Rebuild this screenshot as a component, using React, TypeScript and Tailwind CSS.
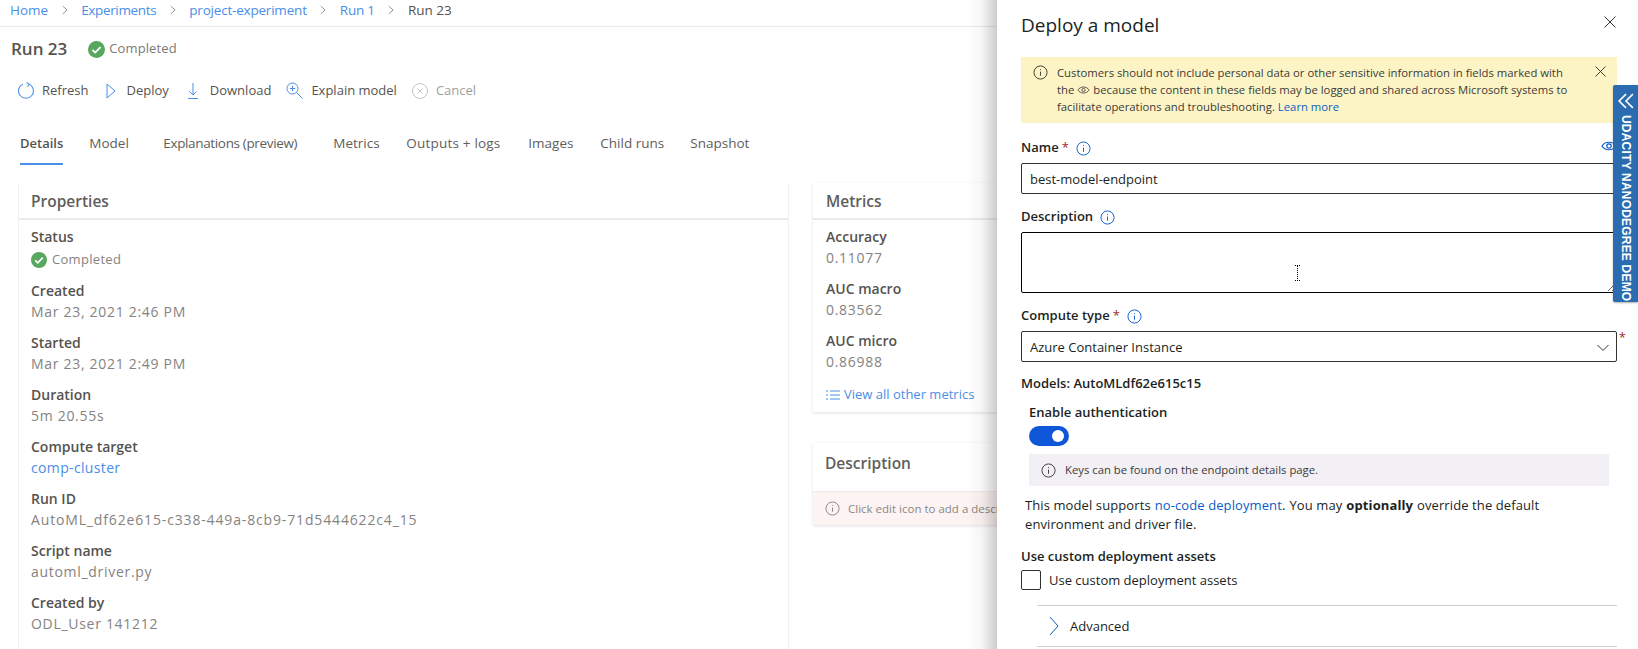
import type { ReactNode } from "react";

function Info({ className }: { className: string }) {
  return (
    <svg viewBox="0 0 16 16" fill="none" stroke="currentColor" strokeWidth="1" className={className}>
      <circle cx="8" cy="8" r="7" />
      <path d="M8 7v4.5M8 4.4v1" />
    </svg>
  );
}

function Check({ className }: { className: string }) {
  return (
    <svg viewBox="0 0 16 16" className={className}>
      <circle cx="8" cy="8" r="8" fill="#57a75e" />
      <path d="M4.2 8.3l2.6 2.6 5-5.2" fill="none" stroke="#fff" strokeWidth="1.7" />
    </svg>
  );
}

function Chevron() {
  return (
    <svg viewBox="0 0 8 12" fill="none" stroke="#71706e" strokeWidth="1" className="mx-[13.5px] h-[12px] w-[6px]">
      <path d="M1 .8L6.8 6 1 11.2" />
    </svg>
  );
}

function Tool({ icon, label, muted, className }: { icon: ReactNode; label: string; muted?: boolean; className: string }) {
  return (
    <div className={`flex items-center ${className}`}>
      {icon}
      <span className={muted ? "text-[#a19f9d]" : "text-[#55534f]"}>{label}</span>
    </div>
  );
}

function Field({ label, children, gap = "mb-[11px]" }: { label: string; children: ReactNode; gap?: string }) {
  return (
    <div className={gap}>
      <div className="h-[20px] text-[14px] leading-[20px] font-semibold text-[#55534f]">{label}</div>
      <div className="h-[21px] text-[14px] leading-[21px] tracking-[0.7px] text-[#85837f]">{children}</div>
    </div>
  );
}

const tabs = [
  ["Model", "w-[74px]"],
  ["Explanations (preview)", "w-[170px] tracking-[-0.35px]"],
  ["Metrics", "w-[73px]"],
  ["Outputs + logs", "w-[122px] tracking-[0.2px]"],
  ["Images", "w-[72px]"],
  ["Child runs", "w-[90px]"],
  ["Snapshot", "w-[70px]"],
];

export default function App() {
  return (
    <div className="relative h-[649px] w-[1638px] overflow-hidden bg-white font-['Open_Sans',sans-serif] text-[14px]">
      {/* breadcrumb */}
      <div className="flex h-[27px] items-center border-b border-[#edebe9] pb-[6px] pl-[10px] text-[13.5px] text-[#4a8ee8]">
        <span>Home</span>
        <Chevron />
        <span className="tracking-[-0.35px]">Experiments</span>
        <Chevron />
        <span className="tracking-[-0.2px]">project-experiment</span>
        <Chevron />
        <span className="tracking-[-0.2px]">Run 1</span>
        <Chevron />
        <span className="text-[#55534f]">Run 23</span>
      </div>

      {/* title */}
      <div className="flex h-[45px] items-center pb-[1px] pl-[11px]">
        <span className="mr-[21px] text-[17px] font-semibold text-[#55534f]">Run 23</span>
        <Check className="mr-[4px] h-[17px] w-[17px]" />
        <span className="text-[13px] tracking-[0.1px] text-[#7b7976]">Completed</span>
      </div>

      {/* toolbar */}
      <div className="flex h-[36px] items-center pt-[1px] text-[13px]">
        <Tool
          className="ml-[18px] gap-[7px]"
          label="Refresh"
          icon={
            <svg viewBox="0 0 16 16" fill="none" stroke="#4a8ee8" className="h-[17px] w-[17px]">
              <path d="M10.5 2A7 7 0 1 1 4.5 2M8 .5L10.5 2 9 4.5" />
            </svg>
          }
        />
        <Tool
          className="ml-[18px] gap-[10px]"
          label="Deploy"
          icon={
            <svg viewBox="0 0 10 16" fill="none" stroke="#4a8ee8" className="h-[16px] w-[10px]">
              <path d="M1 1l8 7-8 7z" />
            </svg>
          }
        />
        <Tool
          className="ml-[19px] gap-[12px]"
          label="Download"
          icon={
            <svg viewBox="0 0 10 16" fill="none" stroke="#4a8ee8" className="h-[16px] w-[10px]">
              <path d="M5 0v12M1.5 8.5L5 12l3.5-3.5M0 15.5h10" />
            </svg>
          }
        />
        <Tool
          className="ml-[15px] gap-[8px]"
          label="Explain model"
          icon={
            <svg viewBox="0 0 17 17" fill="none" stroke="#4a8ee8" className="h-[17px] w-[17px]">
              <circle cx="6.5" cy="6.5" r="5.5" />
              <path d="M10.5 10.5L16.5 16.5M6.5 3.8v5.4M3.8 6.5h5.4" />
            </svg>
          }
        />
        <Tool
          className="ml-[15px] gap-[8px]"
          label="Cancel"
          muted
          icon={
            <svg viewBox="0 0 16 16" fill="none" stroke="#c8c6c4" className="h-[16px] w-[16px]">
              <circle cx="8" cy="8" r="7.5" />
              <path d="M5.5 5.5l5 5M10.5 5.5l-5 5" />
            </svg>
          }
        />
      </div>

      {/* tabs */}
      <div className="flex h-[57px] pl-[20px] pt-[25px] text-[13.5px] leading-[20px] text-[#605e5c]">
        <div className="mr-[26px] h-[32px] border-b-[2px] border-[#4a8ee8] text-[13px] font-semibold text-[#55534f]">Details</div>
        {tabs.map(([name, width]) => (
          <div key={name} className={width}>
            {name}
          </div>
        ))}
      </div>

      {/* cards */}
      <div className="mt-[18px] flex gap-[24px] pl-[18px]">
        <div className="h-[500px] w-[771px] border-l border-r border-[#f3eff5] bg-white">
          <div className="flex h-[37px] items-center border-b-2 border-[#edebe9] pl-[12px] pt-[3px] text-[15.5px] font-semibold text-[#605e5c]">
            Properties
          </div>
          <div className="pl-[12px] pt-[7px]">
            <Field label="Status">
              <div className="mt-[2px] flex items-center gap-[5px] text-[13px] tracking-[0.3px]">
                <Check className="h-[16px] w-[16px]" />
                <span>Completed</span>
              </div>
            </Field>
            <Field label="Created">Mar 23, 2021 2:46 PM</Field>
            <Field label="Started">Mar 23, 2021 2:49 PM</Field>
            <Field label="Duration">5m 20.55s</Field>
            <Field label="Compute target">
              <span className="tracking-[0.35px] text-[#4a8ee8]">comp-cluster</span>
            </Field>
            <Field label="Run ID">
              <span className="tracking-[0.85px]">AutoML_df62e615-c338-449a-8cb9-71d5444622c4_15</span>
            </Field>
            <Field label="Script name">automl_driver.py</Field>
            <Field label="Created by">ODL_User 141212</Field>
          </div>
        </div>

        <div className="w-[400px]">
          <div className="h-[229px] bg-white shadow-[0_1px_3px_rgba(0,0,0,0.12)]">
            <div className="flex h-[37px] items-center border-b-2 border-[#edebe9] pl-[13px] pt-[3px] text-[15.5px] font-semibold text-[#605e5c]">
              Metrics
            </div>
            <div className="pl-[13px] pt-[7px]">
              <Field label="Accuracy">0.11077</Field>
              <Field label="AUC macro">0.83562</Field>
              <Field label="AUC micro" gap="mb-[13px]">0.86988</Field>
              <div className="flex h-[20px] items-center gap-[4px] text-[13px] text-[#4a8ee8]">
                <svg viewBox="0 0 14 10" fill="none" stroke="#4a8ee8" className="h-[10px] w-[14px]">
                  <path d="M0 1h2M4 1h10M0 5h2M4 5h10M0 9h2M4 9h10" />
                </svg>
                <span>View all other metrics</span>
              </div>
            </div>
          </div>
          <div className="mt-[31px] bg-white shadow-[0_1px_3px_rgba(0,0,0,0.12)]">
            <div className="flex h-[49px] items-center border-b border-[#edebe9] pb-[6px] pl-[12px] text-[15.5px] font-semibold text-[#605e5c]">
              Description
            </div>
            <div className="flex h-[33px] items-center gap-[8px] bg-[#fdf3f3] pl-[12px] text-[11.5px] text-[#8a8886]">
              <Info className="h-[15px] w-[15px]" />
              <span>Click edit icon to add a description</span>
            </div>
          </div>
        </div>
      </div>

      {/* deploy panel */}
      <div className="absolute inset-y-0 left-[967px] w-[30px] bg-gradient-to-r from-black/0 via-black/[0.04] to-black/20" />
      <div className="absolute inset-y-0 left-[997px] right-0 bg-white pl-[24px] pr-[21px] text-[13px] text-[#201f1e]">
        <div className="flex h-[50px] items-center justify-between">
          <span className="text-[19px] text-[#201f1e]">Deploy a model</span>
          <svg viewBox="0 0 12 12" fill="none" stroke="#323130" className="mr-[1px] mb-[6px] h-[12px] w-[12px]">
            <path d="M.5.5l11 11M11.5.5l-11 11" />
          </svg>
        </div>

        <div className="mt-[7px] flex h-[66px] bg-[#fdf4c5] pl-[12px] pr-[11px] pt-[7px] text-[11.3px] leading-[17px] text-[#3b3a39]">
          <Info className="mt-[1px] h-[15px] w-[15px] shrink-0" />
          <div className="ml-[9px] w-[530px]">
            <div>Customers should not include personal data or other sensitive information in fields marked with</div>
            <div className="flex items-center gap-[3px]">
              <span>the</span>
              <svg viewBox="0 0 16 10" fill="none" stroke="#3b3a39" className="h-[8px] w-[13px]">
                <path d="M1 5c3-5 11-5 14 0-3 5-11 5-14 0z" />
                <circle cx="8" cy="5" r="2" />
              </svg>
              <span>because the content in these fields may be logged and shared across Microsoft systems to</span>
            </div>
            <div className="flex gap-[3px]">
              <span>facilitate operations and troubleshooting.</span>
              <span className="text-[#0b5cc7]">Learn more</span>
            </div>
          </div>
          <svg viewBox="0 0 12 12" fill="none" stroke="#323130" className="ml-auto mt-[2px] h-[11px] w-[11px]">
            <path d="M.5.5l11 11M11.5.5l-11 11" />
          </svg>
        </div>

        <div className="mt-[15px] flex h-[20px] items-center">
          <span className="font-semibold">Name</span>
          <span className="ml-[3px] text-[#a4262c]">*</span>
          <Info className="ml-[7px] h-[15px] w-[15px] text-[#0b5cc7]" />
          <svg viewBox="0 0 16 10" fill="none" stroke="#0b5cc7" strokeWidth="1.2" className="ml-auto mb-[4px] h-[10px] w-[16px]">
            <path d="M1 5c3-5 11-5 14 0-3 5-11 5-14 0z" />
            <circle cx="8" cy="5" r="2.2" />
          </svg>
        </div>
        <div className="mt-[5px] flex h-[31px] items-center rounded-[2px] border border-[#323130] pl-[8px] pt-[2px] text-[13px]">
          <span>best-model-endpoint</span>
        </div>

        <div className="mt-[13px] flex h-[20px] items-center">
          <span className="font-semibold">Description</span>
          <Info className="ml-[7px] h-[15px] w-[15px] text-[#0b5cc7]" />
        </div>
        <textarea className="mt-[5px] block h-[61px] w-full rounded-[2px] border border-black" />

        <div className="mt-[13px] flex h-[20px] items-center">
          <span className="font-semibold">Compute type</span>
          <span className="ml-[3px] text-[#a4262c]">*</span>
          <Info className="ml-[7px] h-[15px] w-[15px] text-[#0b5cc7]" />
        </div>
        <div className="relative mt-[5px] flex h-[31px] items-center justify-between rounded-[2px] border border-[#323130] pl-[8px] pr-[7px] pt-[2px]">
          <span>Azure Container Instance</span>
          <svg viewBox="0 0 12 8" fill="none" stroke="#323130" className="h-[8px] w-[12px]">
            <path d="M.5 1L6 6.5 11.5 1" />
          </svg>
          <span className="absolute right-[-10px] top-[-4px] text-[#a4262c]">*</span>
        </div>

        <div className="mt-[11px] h-[20px] font-semibold leading-[20px]">Models: AutoMLdf62e615c15</div>
        <div className="ml-[8px] mt-[9px] h-[20px] font-semibold leading-[20px]">Enable authentication</div>
        <div className="ml-[8px] mt-[4px] flex h-[20px] w-[40px] items-center justify-end rounded-full bg-[#0f56d9] pr-[5px]">
          <div className="h-[12px] w-[12px] rounded-full bg-white" />
        </div>
        <div className="ml-[8px] mt-[8px] flex h-[32px] w-[580px] items-center gap-[9px] bg-[#f3f0f5] pl-[12px] text-[11.3px] text-[#3b3a39]">
          <Info className="h-[15px] w-[15px]" />
          <span>Keys can be found on the endpoint details page.</span>
        </div>
        <div className="ml-[4px] mt-[10px] leading-[19px] tracking-[0.1px]">
          <div className="flex gap-[4px]">
            <span>This model supports</span>
            <div className="flex">
              <span className="text-[#0b5cc7]">no-code deployment</span>
              <span>.</span>
            </div>
            <span>You may</span>
            <span className="font-bold">optionally</span>
            <span>override the default</span>
          </div>
          <div>environment and driver file.</div>
        </div>
        <div className="mt-[12px] h-[20px] font-semibold leading-[20px]">Use custom deployment assets</div>
        <div className="mt-[4px] flex h-[20px] items-center gap-[8px]">
          <div className="h-[20px] w-[20px] rounded-[2px] border border-[#323130]" />
          <span className="pt-[1px]">Use custom deployment assets</span>
        </div>
        <div className="ml-[16px] mt-[15px] flex h-[42px] items-center border-y border-[#d2d0ce] pl-[12px]">
          <svg viewBox="0 0 10 20" fill="none" stroke="#0b5cc7" className="mr-[11px] h-[20px] w-[10px]">
            <path d="M1 1l8 9-8 9" />
          </svg>
          <span className="pt-[1px]">Advanced</span>
        </div>

        {/* ribbon over panel */}
        <div className="absolute right-0 top-[85px] flex h-[217px] w-[25px] flex-col items-center rounded-l-[2px] bg-[#2b6cb0] text-white shadow-[0_1px_2px_rgba(0,0,0,0.3)]">
          <svg viewBox="0 0 14 14" fill="none" stroke="#fff" strokeWidth="1.4" className="mt-[8px] h-[16px] w-[16px]">
            <path d="M7 1L1 7l6 6M13 1L7 7l6 6" />
          </svg>
          <div className="mt-[6px] whitespace-nowrap font-['Liberation_Sans',sans-serif] text-[12px] font-bold tracking-[0.2px] [writing-mode:vertical-rl]">
            UDACITY NANODEGREE DEMO
          </div>
        </div>

        {/* text cursor */}
        <svg viewBox="0 0 7 16" fill="none" stroke="#000" strokeDasharray="1 1" className="absolute left-[297px] top-[265px] h-[16px] w-[7px]">
          <path d="M3.5 1v14M1 .5h5M1 15.5h5" />
        </svg>
      </div>
    </div>
  );
}
